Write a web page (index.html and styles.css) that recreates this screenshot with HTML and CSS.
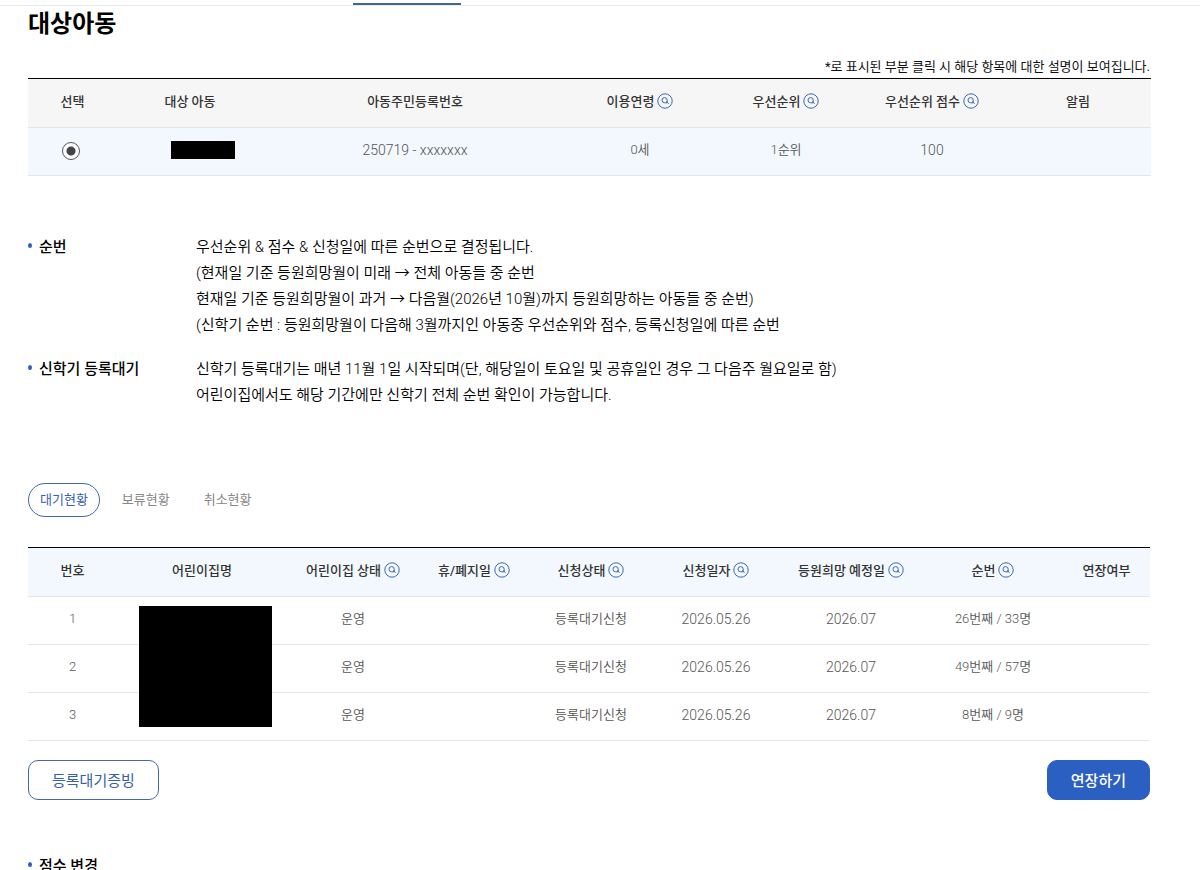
FILE: index.html
```html
<!DOCTYPE html>
<html lang="ko">
  <head>
    <meta charset="UTF-8" />
    <meta name="viewport" content="width=device-width, initial-scale=1.0" />
    <title>대상아동</title>
    <link rel="stylesheet" href="styles.css">
  </head>
  <body>
    <svg class="sprite" aria-hidden="true">
      <symbol id="help" viewBox="0 0 16 16">
        <circle cx="8" cy="8" r="7.2" />
        <path d="M10.2 7.2a2.6 2.6 0 1 0-2.6 2.6h2.6zM9 8.4l2.6 2.2" />
      </symbol>
    </svg>

    <div class="top-bar"><span class="top-active"></span></div>

    <main class="container">
      <h2>대상아동</h2>
      <p class="note">*로 표시된 부분 클릭 시 해당 항목에 대한 설명이 보여집니다.</p>

      <div class="table-wrap">
        <table class="child-table">
          <colgroup>
            <col class="w-89"><col class="w-146"><col class="w-304"><col class="w-146"><col class="w-146"><col class="w-146"><col class="w-146">
          </colgroup>
          <thead>
            <tr>
              <th>선택</th>
              <th>대상 아동</th>
              <th>아동주민등록번호</th>
              <th>이용연령<button type="button" class="help" aria-label="이용연령 설명"><svg><use href="#help" /></svg></button></th>
              <th>우선순위<button type="button" class="help" aria-label="우선순위 설명"><svg><use href="#help" /></svg></button></th>
              <th>우선순위 점수<button type="button" class="help" aria-label="우선순위 점수 설명"><svg><use href="#help" /></svg></button></th>
              <th>알림</th>
            </tr>
          </thead>
          <tbody>
            <tr>
              <td><input type="radio" name="child" aria-label="아동 선택" checked></td>
              <td></td>
              <td class="num">250719 - xxxxxxx</td>
              <td>0세</td>
              <td>1순위</td>
              <td class="num">100</td>
              <td></td>
            </tr>
          </tbody>
        </table>
        <span class="mask mask-name"></span>
      </div>

      <dl class="guide">
        <dt>순번</dt>
        <dd>
          우선순위 &amp; 점수 &amp; 신청일에 따른 순번으로 결정됩니다.<br>
          (현재일 기준 등원희망월이 미래 → 전체 아동들 중 순번<br>
          현재일 기준 등원희망월이 과거 → 다음월(2026년 10월)까지 등원희망하는 아동들 중 순번)<br>
          (신학기 순번 : 등원희망월이 다음해 3월까지인 아동중 우선순위와 점수, 등록신청일에 따른 순번
        </dd>
        <dt>신학기 등록대기</dt>
        <dd>
          신학기 등록대기는 매년 11월 1일 시작되며(단, 해당일이 토요일 및 공휴일인 경우 그 다음주 월요일로 함)<br>
          어린이집에서도 해당 기간에만 신학기 전체 순번 확인이 가능합니다.
        </dd>
      </dl>

      <div class="tabs">
        <button type="button" class="tab active">대기현황</button>
        <button type="button" class="tab">보류현황</button>
        <button type="button" class="tab">취소현황</button>
      </div>

      <div class="table-wrap">
        <table class="wait-table">
          <colgroup>
            <col class="w-89"><col class="w-170"><col class="w-132"><col class="w-110"><col class="w-124"><col class="w-126"><col class="w-144"><col class="w-140"><col class="w-87">
          </colgroup>
          <thead>
            <tr>
              <th>번호</th>
              <th>어린이집명</th>
              <th>어린이집 상태<button type="button" class="help" aria-label="어린이집 상태 설명"><svg><use href="#help" /></svg></button></th>
              <th>휴/폐지일<button type="button" class="help" aria-label="휴/폐지일 설명"><svg><use href="#help" /></svg></button></th>
              <th>신청상태<button type="button" class="help" aria-label="신청상태 설명"><svg><use href="#help" /></svg></button></th>
              <th>신청일자<button type="button" class="help" aria-label="신청일자 설명"><svg><use href="#help" /></svg></button></th>
              <th>등원희망 예정일<button type="button" class="help" aria-label="등원희망 예정일 설명"><svg><use href="#help" /></svg></button></th>
              <th>순번<button type="button" class="help" aria-label="순번 설명"><svg><use href="#help" /></svg></button></th>
              <th>연장여부</th>
            </tr>
          </thead>
          <tbody>
            <tr>
              <td>1</td>
              <td></td>
              <td>운영</td>
              <td></td>
              <td>등록대기신청</td>
              <td class="num">2026.05.26</td>
              <td class="num">2026.07</td>
              <td>26번째 / 33명</td>
              <td></td>
            </tr>
            <tr>
              <td>2</td>
              <td></td>
              <td>운영</td>
              <td></td>
              <td>등록대기신청</td>
              <td class="num">2026.05.26</td>
              <td class="num">2026.07</td>
              <td>49번째 / 57명</td>
              <td></td>
            </tr>
            <tr>
              <td>3</td>
              <td></td>
              <td>운영</td>
              <td></td>
              <td>등록대기신청</td>
              <td class="num">2026.05.26</td>
              <td class="num">2026.07</td>
              <td>8번째 / 9명</td>
              <td></td>
            </tr>
          </tbody>
        </table>
        <span class="mask mask-centers"></span>
      </div>

      <div class="actions">
        <button type="button" class="btn btn-line">등록대기증빙</button>
        <button type="button" class="btn btn-fill">연장하기</button>
      </div>

      <dl class="guide guide-score">
        <dt>점수 변경</dt>
      </dl>
    </main>
  </body>
</html>
```

FILE: styles.css
```css
* {
  box-sizing: border-box;
}

body {
  margin: 0;
  background-color: #fff;
  color: #111;
  font-family: Roboto, "Noto Sans CJK KR", sans-serif;
  font-size: 13px;
}

button {
  font-family: inherit;
  cursor: pointer;
}

.sprite {
  display: none;
}

.top-bar {
  display: flex;
  align-items: flex-end;
  height: 6px;
  padding-left: 353px;
  border-bottom: 1px solid #e8eaec;
}

.top-active {
  width: 108px;
  height: 2px;
  background-color: #40688f;
}

.container {
  margin: 0 50px 0 28px;
}

h2 {
  margin: 0 0 15px;
  color: #000;
  font-size: 24px;
  line-height: 36px;
}

.note {
  margin: 0 0 1px;
  text-align: right;
  line-height: 20px;
}

/* tables */
.table-wrap {
  position: relative;
}

table {
  width: 100%;
  table-layout: fixed;
  border-collapse: separate;
  border-spacing: 0;
  border-top: 1px solid #000;
  text-align: center;
}

th,
td {
  height: 48px;
  padding: 0 0 3px;
  border-bottom: 1px solid #e3e6e9;
  line-height: 20px;
  white-space: nowrap;
}

th {
  height: 49px;
  background-color: #f6f6f6;
  color: #333;
  font-weight: 500;
}

td {
  padding-bottom: 4px;
  color: #555;
  font-weight: 350;
}

.num {
  font-size: 14px;
}

.child-table td {
  background-color: #f2f8fe;
}

.wait-table th {
  background-color: #f2f8fe;
}

.w-87 { width: 87px; }
.w-89 { width: 89px; }
.w-110 { width: 110px; }
.w-124 { width: 124px; }
.w-126 { width: 126px; }
.w-132 { width: 132px; }
.w-140 { width: 140px; }
.w-144 { width: 144px; }
.w-146 { width: 146px; }
.w-170 { width: 170px; }
.w-304 { width: 304px; }

.help {
  width: 16px;
  height: 16px;
  margin: -2px 0 0 3px;
  padding: 0;
  border: 0;
  background: none;
  vertical-align: middle;
}

.help svg {
  display: block;
  width: 16px;
  height: 16px;
  fill: none;
  stroke: #3c68b4;
  stroke-width: 1;
}

input[type="radio"] {
  appearance: none;
  width: 18px;
  height: 18px;
  margin: 2px 4px 0 0;
  border: 1px solid #555;
  border-radius: 50%;
  background: radial-gradient(circle, #444 4px, #fff 5px);
  vertical-align: middle;
}

.mask {
  position: absolute;
  background-color: #000;
}

.mask-name {
  top: 63px;
  left: 143px;
  width: 64px;
  height: 18px;
}

.mask-centers {
  top: 59px;
  left: 111px;
  width: 133px;
  height: 121px;
}

/* guide text */
.guide {
  display: grid;
  grid-template-columns: 168px 1fr;
  row-gap: 18px;
  margin: 58px 0 75px;
  font-size: 15px;
  line-height: 26px;
}

.guide dt {
  position: relative;
  padding-left: 11px;
  color: #000;
  font-weight: 500;
}

.guide dt::before {
  content: "";
  position: absolute;
  top: 9px;
  left: 0;
  width: 4px;
  height: 5px;
  border-radius: 50%;
  background-color: #2b60bf;
}

.guide dd {
  margin: 0;
  color: #000;
  font-weight: 350;
}

.guide-score {
  margin: 53px 0 0;
}

/* tabs */
.tabs {
  display: flex;
  gap: 10px;
  margin-bottom: 30px;
}

.tab {
  height: 34px;
  padding: 0 11px 3px;
  border: 1px solid transparent;
  border-radius: 17px;
  background-color: #fff;
  color: #888;
  font-size: 13px;
}

.tab.active {
  border-color: #4566a8;
  color: #3560b0;
}

/* buttons */
.actions {
  display: flex;
  justify-content: space-between;
  margin-top: 19px;
}

.btn {
  height: 40px;
  padding: 0 23px 2px;
  border: 1px solid #2b60c2;
  border-radius: 10px;
  font-size: 15px;
}

.btn-line {
  border-color: #4566a8;
  background-color: #fff;
  color: #3560a8;
}

.btn-fill {
  background-color: #2b60c2;
  color: #fff;
  font-weight: 500;
}
```
